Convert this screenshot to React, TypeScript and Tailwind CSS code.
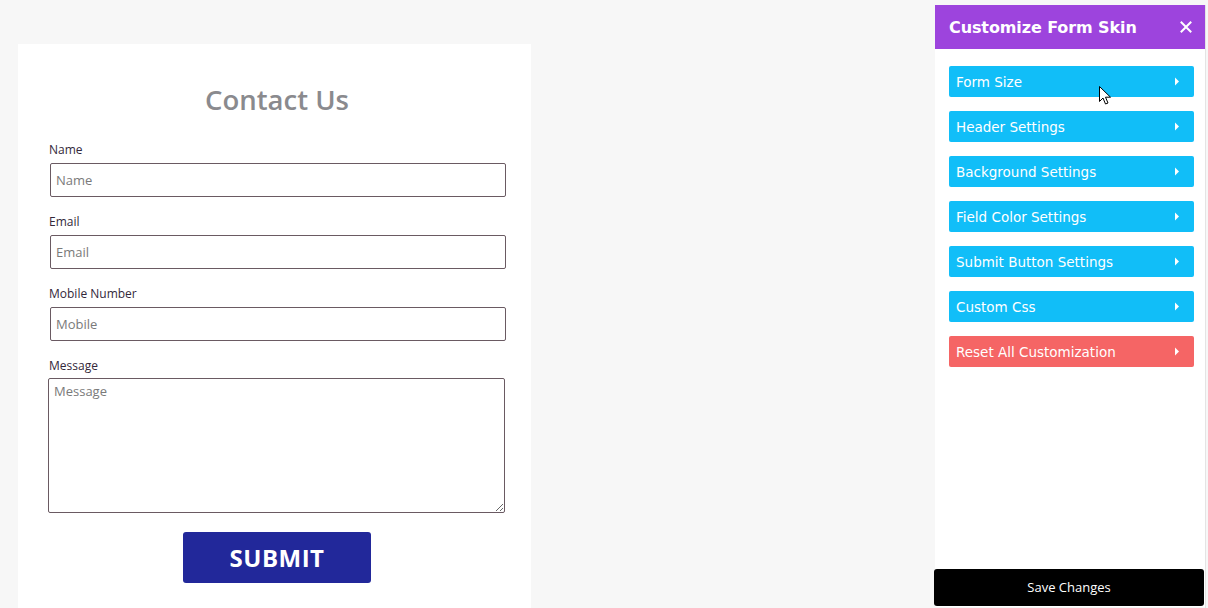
import React from "react";

const items: { label: string; red?: boolean }[] = [
  { label: "Form Size" },
  { label: "Header Settings" },
  { label: "Background Settings" },
  { label: "Field Color Settings" },
  { label: "Submit Button Settings" },
  { label: "Custom Css" },
  { label: "Reset All Customization", red: true },
];

function Caret() {
  return (
    <svg width="6" height="9" viewBox="0 0 6 9" className="shrink-0">
      <path d="M1 0.5 L5 4.5 L1 8.5 Z" fill="#ffffff" />
    </svg>
  );
}

function Field({ label, placeholder }: { label: string; placeholder: string }) {
  return (
    <div className="flex flex-col">
      <label className="text-[12px] leading-[16px] text-[#33283a]">{label}</label>
      <input
        placeholder={placeholder}
        className="mt-[5px] ml-[1px] h-[34px] w-[456px] rounded-[2px] border border-[#6a5a62] bg-white px-[5px] text-[13px] text-[#333] placeholder:text-[#7a7a7a] outline-none"
        style={{ fontFamily: '"Open Sans", sans-serif' }}
      />
    </div>
  );
}

export default function App() {
  return (
    <div className="relative flex h-[608px] w-[1208px] overflow-hidden bg-[#f7f7f7]">
      {/* Form card */}
      <div
        className="ml-[18px] mt-[44px] flex h-[600px] w-[513px] flex-col bg-white pl-[31px]"
        style={{ fontFamily: '"Open Sans", sans-serif' }}
      >
        <h1 className="mt-[40px] w-[456px] text-center text-[27.5px] font-semibold leading-[32px] text-[#8a8a8e]">
          Contact Us
        </h1>
        <div className="mt-[26px] flex flex-col gap-[17px]">
          <Field label="Name" placeholder="Name" />
          <Field label="Email" placeholder="Email" />
          <Field label="Mobile Number" placeholder="Mobile" />
          <div className="flex flex-col">
            <label className="text-[12px] leading-[16px] text-[#33283a]">Message</label>
            <textarea
              placeholder="Message"
              className="-ml-[1px] mt-[4px] h-[135px] w-[457px] resize-y rounded-[2px] border border-[#6a5a62] bg-white px-[5px] py-[3px] text-[13px] text-[#333] placeholder:text-[#7a7a7a] outline-none"
            />
          </div>
        </div>
        <div className="mt-[19px] flex w-[456px] justify-center">
          <button className="h-[51px] w-[188px] rounded-[3px] bg-[#22289a] text-[24px] font-bold tracking-[0.5px] text-white">
            SUBMIT
          </button>
        </div>
      </div>

      {/* Customize panel */}
      <div className="ml-[404px] mt-[5px] flex h-[602px] w-[270px] flex-col bg-white" style={{ fontFamily: '"DejaVu Sans", Verdana, sans-serif' }}>
        <div className="flex h-[44px] items-center justify-between bg-[#9d44dd] pl-[14px] pr-[13px]">
          <span className="pt-[1px] text-[16px] font-bold tracking-[-0.1px] text-white">Customize Form Skin</span>
          <svg width="12" height="12" viewBox="0 0 12 12">
            <path d="M1.5 1.5 L10.5 10.5 M10.5 1.5 L1.5 10.5" stroke="#ffffff" strokeWidth="2" strokeLinecap="square" />
          </svg>
        </div>
        <div className="mt-[17px] flex flex-col gap-[14px] pl-[14px] pr-[11px]">
          {items.map((it) => (
            <div
              key={it.label}
              className={`flex h-[31px] items-center justify-between rounded-[2px] pl-[7px] pr-[14px] text-[13.5px] text-white ${
                it.red ? "bg-[#f56565]" : "bg-[#11bef8]"
              }`}
            >
              <span className="pt-[1px]">{it.label}</span>
              <Caret />
            </div>
          ))}
        </div>
        <div className="flex-1" />
        <button
          className="-ml-[1px] mb-[1px] h-[37px] w-[270px] rounded-[3px] bg-black text-[13px] text-white"
          style={{ fontFamily: '"Open Sans", sans-serif' }}
        >
          Save Changes
        </button>
      </div>
      <div className="mt-[5px] h-[603px] w-[1px] bg-[#e4e4e4]" />

      {/* mouse cursor */}
      <svg className="absolute left-[1099px] top-[86px]" width="13" height="20" viewBox="0 0 13 20">
        <path d="M0.5 0.5 L0.5 15.5 L4 12 L6.5 18 L9 17 L6.5 11.2 L11.5 11.2 Z" fill="#ffffff" stroke="#000000" strokeWidth="1" strokeLinejoin="miter" />
      </svg>
    </div>
  );
}
